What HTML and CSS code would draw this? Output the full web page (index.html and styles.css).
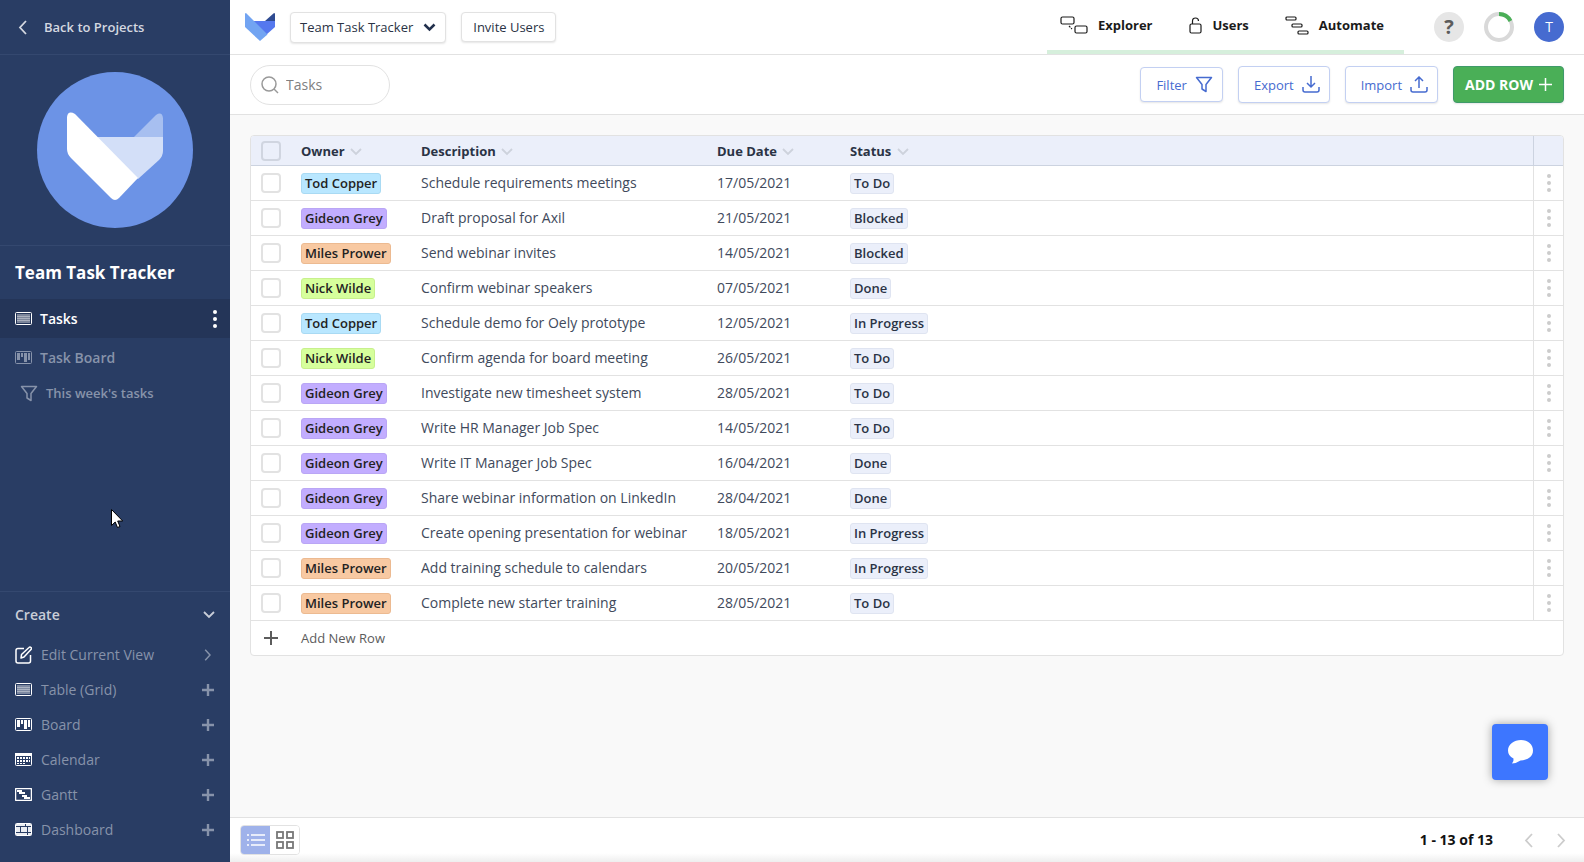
FILE: index.html
```
<!DOCTYPE html>
<html lang="en">
<head>
	<meta charset="utf-8">
	<title>Team Task Tracker</title>
	<link rel="stylesheet" href="styles.css">
</head>
<body>

<!-- shared icons -->
<svg class="sprite" aria-hidden="true">
	<symbol id="i-down" viewBox="0 0 12 8"><path d="M1 1l5 5 5-5" fill="none" stroke="currentColor" stroke-width="1.800"/></symbol>
	<symbol id="i-left" viewBox="0 0 9 15"><path d="M8 1L2 7.500l6 6.500" fill="none" stroke="currentColor" stroke-width="1.800"/></symbol>
	<symbol id="i-right" viewBox="0 0 9 15"><path d="M1 1l6 6.500L1 14" fill="none" stroke="currentColor" stroke-width="1.800"/></symbol>
	<symbol id="i-plus" viewBox="0 0 14 14"><path d="M7 0v14M0 7h14" fill="none" stroke="currentColor" stroke-width="2"/></symbol>
	<symbol id="i-plus-bold" viewBox="0 0 12 12"><path d="M6 0v12M0 6h12" fill="none" stroke="currentColor" stroke-width="2.400"/></symbol>
	<symbol id="i-dots" viewBox="0 0 4 18"><g fill="currentColor"><circle cx="2" cy="2" r="2"/><circle cx="2" cy="9" r="2"/><circle cx="2" cy="16" r="2"/></g></symbol>
	<symbol id="i-funnel" viewBox="0 0 18 17"><path d="M1.500 1.500h15L11 8.500V15.500L7 13V8.500z" fill="none" stroke="currentColor" stroke-width="1.500" stroke-linejoin="round"/></symbol>
	<symbol id="i-grid" viewBox="0 0 17 13"><rect x=".5" y=".5" width="16" height="12" rx="1" fill="none" stroke="currentColor"/><path d="M2 2h13v9H2z" fill="currentColor" opacity=".4"/><path d="M2 4.500h13M2 6.500h13M2 8.500h13" stroke="currentColor" opacity=".35"/></symbol>
	<symbol id="i-board" viewBox="0 0 17 13"><rect x=".5" y=".5" width="16" height="12" rx="1" fill="none" stroke="currentColor"/><path d="M2 2h3v7H2zM6 2h2v4H6zM9 2h3v9H9zM13 2h2v7h-2z" fill="currentColor"/></symbol>
	<symbol id="i-calendar" viewBox="0 0 17 13"><rect x=".5" y=".5" width="16" height="12" rx="1" fill="none" stroke="currentColor"/><path d="M0 0h17v3H0zM2 4h2v2H2zM5 4h2v2H5zM8 4h2v2H8zM11 4h2v2h-2zM14 4h1v2h-1zM2 7h2v2H2zM5 7h2v2H5zM8 7h2v2H8zM11 7h2v2h-2zM14 7h1v2h-1zM2 10h2v1H2zM5 10h2v1H5zM8 10h2v1H8z" fill="currentColor"/></symbol>
	<symbol id="i-gantt" viewBox="0 0 17 13"><rect x=".5" y=".5" width="16" height="12" rx="1" fill="none" stroke="currentColor" stroke-width="1.500"/><path d="M2 2h5v2H2zM4 4h6v2H4zM7 7h5v2H7zM9 9h6v2H9z" fill="currentColor"/></symbol>
	<symbol id="i-dash" viewBox="0 0 17 13"><rect x=".5" y=".5" width="16" height="12" rx="1" fill="none" stroke="currentColor"/><path d="M1 1h9v2H1zM11 1h5v2h-5zM1 4h4v5H1zM6 4h6v5H6zM13 4h3v5h-3zM1 10h11v2H1zM13 10h3v2h-3z" fill="currentColor" opacity=".9"/></symbol>
</svg>

<div class="app">
	<aside class="sidebar">
		<a class="back" href="#"><svg width="9" height="15"><use href="#i-left"/></svg>Back to Projects</a>

		<div class="project-logo">
			<svg width="156" height="156" viewBox="0 0 156 156" role="img" aria-label="Project logo">
				<circle cx="78" cy="78" r="78" fill="#6c93e6"/>
				<path d="M97 65l22-22q6-4 7 3v19z" fill="#a7bff0"/>
				<path d="M58 65h68v14q0 5-4 9l-21 19z" fill="#d3dff8"/>
				<path d="M30 45q1-7 8-3l63 64-19 20q-4 4-8 0L34 86q-4-4-4-9z" fill="#fff"/>
			</svg>
		</div>

		<h1>Team Task Tracker</h1>

		<nav class="views">
			<div class="view active">
				<a href="#"><svg width="17" height="13"><use href="#i-grid"/></svg>Tasks</a>
				<button aria-label="View options"><svg width="4" height="18"><use href="#i-dots"/></svg></button>
			</div>
			<div class="view"><a href="#"><svg width="17" height="13"><use href="#i-board"/></svg>Task Board</a></div>
			<div class="view sub"><a href="#"><svg width="18" height="17"><use href="#i-funnel"/></svg>This week's tasks</a></div>
		</nav>

		<div class="create">
			<button class="create-title">Create <svg width="12" height="8"><use href="#i-down"/></svg></button>
			<button class="create-item"><svg width="17" height="18" viewBox="0 0 17 18"><path d="M9 2.500H3Q1 2.500 1 4.500v10.500Q1 17 3 17h10.500q2 0 2-2V9M6 12l.5-3.500L14 1.500q1-1 2 0t0 2L9 11z" fill="none" stroke="currentColor" stroke-width="1.500" stroke-linejoin="round"/></svg><span>Edit Current View</span><svg class="more" width="12" height="12"><use href="#i-right"/></svg></button>
			<button class="create-item"><svg width="17" height="13"><use href="#i-grid"/></svg><span>Table (Grid)</span><svg class="more" width="12" height="12"><use href="#i-plus-bold"/></svg></button>
			<button class="create-item"><svg width="17" height="13"><use href="#i-board"/></svg><span>Board</span><svg class="more" width="12" height="12"><use href="#i-plus-bold"/></svg></button>
			<button class="create-item"><svg width="17" height="13"><use href="#i-calendar"/></svg><span>Calendar</span><svg class="more" width="12" height="12"><use href="#i-plus-bold"/></svg></button>
			<button class="create-item"><svg width="17" height="13"><use href="#i-gantt"/></svg><span>Gantt</span><svg class="more" width="12" height="12"><use href="#i-plus-bold"/></svg></button>
			<button class="create-item"><svg width="17" height="13"><use href="#i-dash"/></svg><span>Dashboard</span><svg class="more" width="12" height="12"><use href="#i-plus-bold"/></svg></button>
		</div>
	</aside>

	<main class="main">
		<header class="topbar">
			<a class="logo" href="#" aria-label="Home">
				<svg width="30" height="28" viewBox="0 0 30 28"><path d="M20 8l9-8q1 0 1 1v8z" fill="#2f4b91"/><path d="M8 8h22v6L21 22z" fill="#5578ee"/><path d="M0 1q0-1 1-1l21.500 21.500L15 28 0 14z" fill="#72a4f2"/></svg>
			</a>
			<button class="btn project">Team Task Tracker <svg width="13" height="9" viewBox="0 0 13 9"><path d="M1.500 1.500l5 5 5-5" fill="none" stroke="#22304d" stroke-width="2.500"/></svg></button>
			<button class="btn invite">Invite Users</button>

			<nav class="tabs">
				<a href="#"><svg width="28" height="19" viewBox="0 0 28 19"><g fill="none" stroke="currentColor" stroke-width="1.200"><rect x="1" y="1" width="13" height="7" rx="1.500"/><rect x="15" y="10" width="12" height="7" rx="1.500"/><path d="M9 10l3 3" stroke-dasharray="2 1"/></g></svg>Explorer</a>
				<a href="#"><svg width="14" height="17" viewBox="0 0 14 17"><g fill="none" stroke="currentColor" stroke-width="1.200"><rect x="1" y="7" width="11" height="9" rx="1.500"/><path d="M3.500 7V4q0-3 3-3t3 3"/></g></svg>Users</a>
				<a href="#"><svg width="24" height="19" viewBox="0 0 24 19"><g fill="none" stroke="currentColor" stroke-width="1.200"><rect x="1" y="1" width="10" height="3" rx="1"/><rect x="7" y="8" width="10" height="3" rx="1"/><rect x="13" y="15" width="10" height="3" rx="1"/></g></svg>Automate</a>
			</nav>

			<button class="round help" aria-label="Help">?</button>
			<svg class="progress" width="30" height="30" viewBox="0 0 30 30" role="img" aria-label="Setup progress"><circle cx="15" cy="15" r="13" fill="none" stroke="#d9d9d9" stroke-width="4"/><path d="M15 2a13 13 0 0 1 11.500 7" fill="none" stroke="#4aaf57" stroke-width="4"/></svg>
			<button class="round avatar">T</button>
		</header>

		<div class="toolbar">
			<label class="search">
				<svg width="18" height="18" viewBox="0 0 18 18"><g fill="none" stroke="#999" stroke-width="1.500"><circle cx="8" cy="8" r="7"/><path d="M13 13l4 4"/></g></svg>
				<input type="text" placeholder="Tasks" aria-label="Search tasks">
			</label>
			<button class="btn tool filter">Filter <svg width="18" height="17"><use href="#i-funnel"/></svg></button>
			<button class="btn tool">Export <svg width="18" height="17" viewBox="0 0 18 17"><path d="M9 0v11M5 7l4 4 4-4M1 11v3q0 2 2 2h12q2 0 2-2v-3" fill="none" stroke="currentColor" stroke-width="1.500"/></svg></button>
			<button class="btn tool">Import <svg width="18" height="17" viewBox="0 0 18 17"><path d="M9 12V1M5 5l4-4 4 4M1 11v3q0 2 2 2h12q2 0 2-2v-3" fill="none" stroke="currentColor" stroke-width="1.500"/></svg></button>
			<button class="btn add">ADD ROW <svg width="13" height="13" viewBox="0 0 13 13"><path d="M6.500 0v13M0 6.500h13" stroke="#fff" stroke-width="1.500"/></svg></button>
		</div>

		<div class="content">
			<div class="table-box">
			<table>
				<colgroup><col class="c-check"><col class="c-owner"><col class="c-desc"><col class="c-due"><col><col class="c-menu"></colgroup>
				<thead>
					<tr>
						<th><input type="checkbox" aria-label="Select all"></th>
						<th>Owner <svg width="12" height="8"><use href="#i-down"/></svg></th>
						<th>Description <svg width="12" height="8"><use href="#i-down"/></svg></th>
						<th>Due Date <svg width="12" height="8"><use href="#i-down"/></svg></th>
						<th>Status <svg width="12" height="8"><use href="#i-down"/></svg></th>
						<th></th>
					</tr>
				</thead>
				<tbody>
					<tr><td><input type="checkbox" aria-label="Select row"></td><td><span class="tag tod">Tod Copper</span></td><td>Schedule requirements meetings</td><td>17/05/2021</td><td><span class="tag">To Do</span></td><td><button aria-label="Row menu"><svg width="4" height="18"><use href="#i-dots"/></svg></button></td></tr>
					<tr><td><input type="checkbox" aria-label="Select row"></td><td><span class="tag gideon">Gideon Grey</span></td><td>Draft proposal for Axil</td><td>21/05/2021</td><td><span class="tag">Blocked</span></td><td><button aria-label="Row menu"><svg width="4" height="18"><use href="#i-dots"/></svg></button></td></tr>
					<tr><td><input type="checkbox" aria-label="Select row"></td><td><span class="tag miles">Miles Prower</span></td><td>Send webinar invites</td><td>14/05/2021</td><td><span class="tag">Blocked</span></td><td><button aria-label="Row menu"><svg width="4" height="18"><use href="#i-dots"/></svg></button></td></tr>
					<tr><td><input type="checkbox" aria-label="Select row"></td><td><span class="tag nick">Nick Wilde</span></td><td>Confirm webinar speakers</td><td>07/05/2021</td><td><span class="tag">Done</span></td><td><button aria-label="Row menu"><svg width="4" height="18"><use href="#i-dots"/></svg></button></td></tr>
					<tr><td><input type="checkbox" aria-label="Select row"></td><td><span class="tag tod">Tod Copper</span></td><td>Schedule demo for Oely prototype</td><td>12/05/2021</td><td><span class="tag">In Progress</span></td><td><button aria-label="Row menu"><svg width="4" height="18"><use href="#i-dots"/></svg></button></td></tr>
					<tr><td><input type="checkbox" aria-label="Select row"></td><td><span class="tag nick">Nick Wilde</span></td><td>Confirm agenda for board meeting</td><td>26/05/2021</td><td><span class="tag">To Do</span></td><td><button aria-label="Row menu"><svg width="4" height="18"><use href="#i-dots"/></svg></button></td></tr>
					<tr><td><input type="checkbox" aria-label="Select row"></td><td><span class="tag gideon">Gideon Grey</span></td><td>Investigate new timesheet system</td><td>28/05/2021</td><td><span class="tag">To Do</span></td><td><button aria-label="Row menu"><svg width="4" height="18"><use href="#i-dots"/></svg></button></td></tr>
					<tr><td><input type="checkbox" aria-label="Select row"></td><td><span class="tag gideon">Gideon Grey</span></td><td>Write HR Manager Job Spec</td><td>14/05/2021</td><td><span class="tag">To Do</span></td><td><button aria-label="Row menu"><svg width="4" height="18"><use href="#i-dots"/></svg></button></td></tr>
					<tr><td><input type="checkbox" aria-label="Select row"></td><td><span class="tag gideon">Gideon Grey</span></td><td>Write IT Manager Job Spec</td><td>16/04/2021</td><td><span class="tag">Done</span></td><td><button aria-label="Row menu"><svg width="4" height="18"><use href="#i-dots"/></svg></button></td></tr>
					<tr><td><input type="checkbox" aria-label="Select row"></td><td><span class="tag gideon">Gideon Grey</span></td><td>Share webinar information on LinkedIn</td><td>28/04/2021</td><td><span class="tag">Done</span></td><td><button aria-label="Row menu"><svg width="4" height="18"><use href="#i-dots"/></svg></button></td></tr>
					<tr><td><input type="checkbox" aria-label="Select row"></td><td><span class="tag gideon">Gideon Grey</span></td><td>Create opening presentation for webinar</td><td>18/05/2021</td><td><span class="tag">In Progress</span></td><td><button aria-label="Row menu"><svg width="4" height="18"><use href="#i-dots"/></svg></button></td></tr>
					<tr><td><input type="checkbox" aria-label="Select row"></td><td><span class="tag miles">Miles Prower</span></td><td>Add training schedule to calendars</td><td>20/05/2021</td><td><span class="tag">In Progress</span></td><td><button aria-label="Row menu"><svg width="4" height="18"><use href="#i-dots"/></svg></button></td></tr>
					<tr><td><input type="checkbox" aria-label="Select row"></td><td><span class="tag miles">Miles Prower</span></td><td>Complete new starter training</td><td>28/05/2021</td><td><span class="tag">To Do</span></td><td><button aria-label="Row menu"><svg width="4" height="18"><use href="#i-dots"/></svg></button></td></tr>
				</tbody>
			</table>
			<button class="new-row"><svg width="14" height="14"><use href="#i-plus"/></svg>Add New Row</button>
			</div>
		</div>

		<footer class="footer">
			<div class="switch">
				<button class="on" aria-label="List view"><svg width="18" height="14" viewBox="0 0 18 14"><path d="M0 2h2M0 7h2M0 12h2M4 2h14M4 7h14M4 12h14" stroke="#fff" stroke-width="1.500"/></svg></button>
				<button aria-label="Card view"><svg width="18" height="18" viewBox="0 0 18 18"><g fill="none" stroke="#777" stroke-width="1.800"><rect x="1" y="1" width="6" height="6"/><rect x="11" y="1" width="6" height="6"/><rect x="1" y="11" width="6" height="6"/><rect x="11" y="11" width="6" height="6"/></g></svg></button>
			</div>
			<span class="count">1 - 13 of 13</span>
			<button class="page" aria-label="Previous page"><svg width="9" height="15"><use href="#i-left"/></svg></button>
			<button class="page" aria-label="Next page"><svg width="9" height="15"><use href="#i-right"/></svg></button>
		</footer>
	</main>
</div>

<button class="chat" aria-label="Chat"><svg width="25" height="24" viewBox="0 0 25 24"><path d="M13 0C20 0 25 4.500 25 10.500S20 20 12.500 20.500Q8 23.500 4 23.500q2-2 1.500-5Q0 16 0 10.500C0 4.500 6 0 13 0z" fill="#fff"/></svg></button>

<svg class="cursor" width="12" height="19" viewBox="0 0 12 19"><path d="M.5.500v16l3.700-3.500 2.300 5.500 2.500-1-2.300-5.500h5z" fill="#fff" stroke="#000"/></svg>

</body>
</html>
```
FILE: styles.css
```
* {
	box-sizing: border-box;
}

body {
	margin: 0;
	font-family: "Open Sans", sans-serif;
	font-size: 14px;
	line-height: 20px;
	color: #2a3345;
}

button, input {
	font: inherit;
	color: inherit;
}

button {
	padding: 0;
	border: 0;
	background: none;
	cursor: pointer;
}

a {
	color: inherit;
	text-decoration: none;
}

svg {
	flex: none;
}

.sprite {
	position: absolute;
	width: 0;
	height: 0;
}

.app {
	display: flex;
	min-height: 100vh;
}

/* sidebar */

.sidebar {
	display: flex;
	flex-direction: column;
	width: 230px;
	flex: none;
	background: #293d64;
	color: #8793aa;
}

.back {
	display: flex;
	align-items: center;
	gap: 17px;
	height: 55px;
	padding-left: 18px;
	border-bottom: 1px solid #34486f;
	color: #d4d8e0;
	font-size: 13px;
	font-weight: 600;
}

.project-logo {
	display: flex;
	justify-content: center;
	padding: 17px 0;
	border-bottom: 1px solid #34486f;
}

.sidebar h1 {
	margin: 0;
	padding: 16px 15px;
	color: #fff;
	font-size: 17px;
	line-height: 21px;
	font-weight: 700;
}

.view {
	display: flex;
	align-items: center;
	justify-content: space-between;
	height: 39px;
	padding: 0 13px 0 15px;
	font-weight: 600;
}

.view a {
	display: flex;
	align-items: center;
	gap: 8px;
}

.view button {
	display: flex;
}

.view.active {
	background: #243558;
	color: #fff;
}

.view.sub {
	height: 32px;
	padding-left: 20px;
	font-size: 13px;
}

.create {
	margin-top: auto;
	padding-bottom: 15px;
	border-top: 1px solid #34486f;
}

.create-title {
	display: flex;
	align-items: center;
	justify-content: space-between;
	width: 100%;
	height: 45px;
	padding: 0 15px;
	color: #c9ced8;
	font-weight: 600;
}

.create-item {
	display: flex;
	align-items: center;
	gap: 9px;
	width: 100%;
	height: 35px;
	padding: 0 16px 0 15px;
	text-align: left;
}

.create-item svg {
	color: #fff;
}

.create-item span {
	flex: 1;
}

.create-item .more {
	color: #8793aa;
}

/* top */

.main {
	display: flex;
	flex-direction: column;
	flex: 1;
	min-width: 0;
	background: #f9f9f9;
}

.topbar {
	display: flex;
	align-items: center;
	height: 55px;
	padding: 0 20px 0 15px;
	background: #fff;
	border-bottom: 1px solid #e2e2e2;
}

.logo {
	display: flex;
	margin-right: 15px;
}

.btn {
	display: flex;
	align-items: center;
	justify-content: center;
	border: 1px solid #e2e2e2;
	border-radius: 4px;
	background: #fff;
	box-shadow: 0 1px 2px rgba(0, 0, 0, 0.1);
	font-size: 13px;
	font-weight: 500;
}

.project {
	gap: 10px;
	height: 31px;
	padding: 0 9px;
	margin-right: 15px;
}

.invite {
	height: 30px;
	padding: 0 11px;
}

.tabs {
	display: flex;
	align-self: stretch;
	gap: 36px;
	margin-left: auto;
	margin-right: 30px;
	padding: 0 20px 0 13px;
	border-bottom: 4px solid #d6efdc;
	color: #1b1b1b;
	font-size: 13px;
	font-weight: 700;
}

.tabs a {
	display: flex;
	align-items: center;
	gap: 10px;
}

.round {
	width: 30px;
	height: 30px;
	border-radius: 50%;
}

.help {
	background: #e6e6e6;
	color: #5c5c5c;
	font-size: 20px;
	font-weight: 700;
}

.progress {
	margin: 0 20px;
}

.avatar {
	background: #466bd0;
	color: #fff;
}

.toolbar {
	display: flex;
	align-items: center;
	gap: 15px;
	height: 60px;
	padding: 0 20px;
	background: #fff;
	border-bottom: 1px solid #e2e2e2;
}

.search {
	display: flex;
	align-items: center;
	gap: 7px;
	width: 140px;
	height: 40px;
	margin-right: auto;
	padding: 0 10px;
	border: 1px solid #e2e2e2;
	border-radius: 20px;
}

.search input {
	width: 100%;
	min-width: 0;
	padding: 0;
	border: 0;
	outline: 0;
	background: none;
}

.search input::placeholder {
	color: #808080;
}

.tool {
	gap: 8px;
	height: 37px;
	padding: 0 9px 0 15px;
	border-color: #c3d0f2;
	color: #466bd0;
}

.filter {
	height: 35px;
}

.add {
	gap: 6px;
	height: 37px;
	padding: 0 11px;
	border-color: #3f9a6a;
	background: #4aaf57;
	color: #fff;
	font-size: 14px;
	font-weight: 700;
}

/* table */

.content {
	flex: 1;
	padding: 20px;
}

.table-box {
	border: 1px solid #e2e2e2;
	border-radius: 4px;
	background: #fff;
	overflow: hidden;
}

table {
	width: 100%;
	table-layout: fixed;
	border-spacing: 0;
}

.c-check {
	width: 40px;
}

.c-owner {
	width: 120px;
}

.c-desc {
	width: 296px;
}

.c-due {
	width: 133px;
}

.c-menu {
	width: 30px;
}

th, td {
	height: 35px;
	padding: 0 0 0 10px;
	border-bottom: 1px solid #e2e2e2;
	text-align: left;
	white-space: nowrap;
}

td {
	color: #414a5c;
}

th {
	height: 30px;
	border-color: #ccd3e0;
	background: #ebeffa;
	font-size: 13px;
	font-weight: 700;
}

th svg {
	margin-left: 2px;
	color: #cdd2dc;
}

th:last-child, td:last-child {
	padding: 0;
	border-left: 1px solid #e2e2e2;
}

th:last-child {
	border-left-color: #ccd3e0;
}

td button {
	display: flex;
	justify-content: center;
	width: 100%;
	color: #ccc;
}

input[type="checkbox"] {
	display: block;
	appearance: none;
	width: 20px;
	height: 20px;
	margin: 0;
	border: 2px solid #e2e2e2;
	border-radius: 4px;
}

th input[type="checkbox"] {
	border-color: #d0d5e0;
}

.tag {
	display: inline-block;
	padding: 0 3px;
	border: 1px solid #dfe4f1;
	border-radius: 3px;
	background: #ebeffa;
	color: #2a3345;
	font-size: 13px;
	line-height: 19px;
	font-weight: 600;
}

.tag.tod {
	background: #b9e7ff;
	border-color: #a9daf3;
	color: #222;
}

.tag.gideon {
	background: #c2adff;
	border-color: #baa6f5;
	color: #222;
}

.tag.miles {
	background: #f8c9a2;
	border-color: #ecba91;
	color: #222;
}

.tag.nick {
	background: #d6ff9c;
	border-color: #c8f08d;
	color: #222;
}

.new-row {
	display: flex;
	align-items: center;
	gap: 23px;
	width: 100%;
	height: 34px;
	padding: 0 13px;
	color: #5c5c5c;
	font-size: 13px;
	font-weight: 500;
}

/* footer */

.footer {
	display: flex;
	align-items: center;
	height: 45px;
	padding: 0 11px 0 10px;
	border-top: 1px solid #e2e2e2;
	background: linear-gradient(#fff 80%, #eee);
}

.switch {
	display: flex;
	height: 30px;
	border: 1px solid #e2e2e2;
	border-radius: 4px;
	overflow: hidden;
}

.switch button {
	display: flex;
	align-items: center;
	justify-content: center;
	width: 29px;
	background: #fff;
}

.switch .on {
	background: #9fb2ea;
}

.count {
	margin-left: auto;
	margin-right: 14px;
	color: #111;
	font-weight: 700;
}

.page {
	display: flex;
	margin-left: 10px;
	padding: 0 7px;
	color: #ccc;
}

.chat {
	position: fixed;
	right: 36px;
	bottom: 82px;
	display: flex;
	align-items: center;
	justify-content: center;
	width: 56px;
	height: 56px;
	border-radius: 4px;
	background: #3d76ff;
	box-shadow: 0 0 10px rgba(0, 0, 0, 0.35);
}

.cursor {
	position: absolute;
	left: 111px;
	top: 509px;
}
```
